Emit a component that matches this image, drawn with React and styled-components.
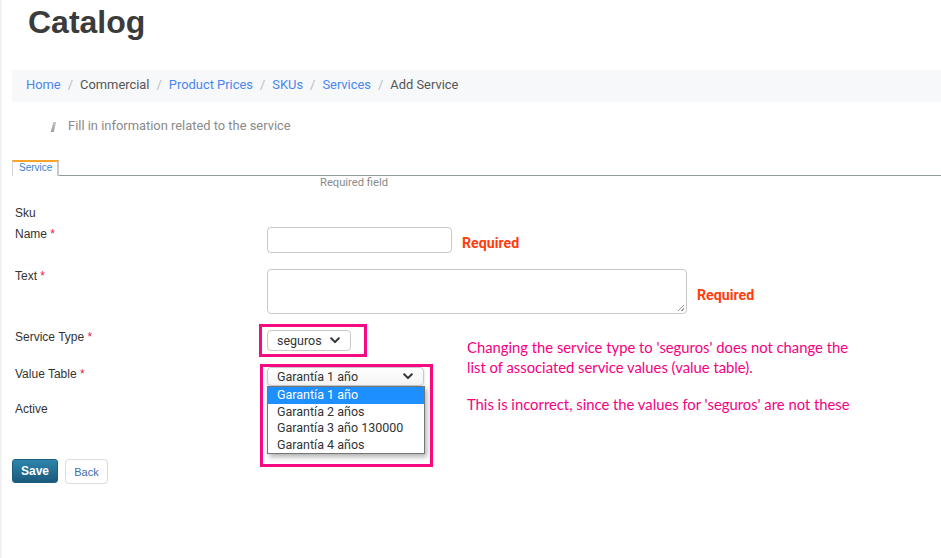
import React from 'react'
import styled, {createGlobalStyle} from "styled-components";

const GlobalStyle = createGlobalStyle`
  html, body {
    margin: 0;
    padding: 0;
    background: #fff;
  }
`;

const crumbs = [
  {label: "Home", link: true},
  {label: "Commercial"},
  {label: "Product Prices", link: true},
  {label: "SKUs", link: true},
  {label: "Services", link: true},
  {label: "Add Service"},
];

const options = ["Garantía 1 año", "Garantía 2 años", "Garantía 3 año 130000", "Garantía 4 años"];

const Chevron = () => (
  <svg width="10" height="7" viewBox="0 0 10 7">
    <path d="M1.2 1.3 L5 5.1 L8.8 1.3" fill="none" stroke="#333" strokeWidth="2" strokeLinecap="round" strokeLinejoin="round"/>
  </svg>
);

const App = () => {
  return (
    <Wrapper>
      <GlobalStyle/>
      <Title>Catalog</Title>

      <Breadcrumb>
        {crumbs.map((c, i) => (
          <React.Fragment key={c.label}>
            {i > 0 && <Sep>/</Sep>}
            <Crumb $link={c.link}>{c.label}</Crumb>
          </React.Fragment>
        ))}
      </Breadcrumb>

      <Intro>
        <Mark/>
        <span>Fill in information related to the service</span>
      </Intro>

      <Tabs>
        <Tab>Service</Tab>
      </Tabs>
      <RequiredNote>Required field</RequiredNote>

      <Form>
        <Row $gap={6}>
          <Label>Sku</Label>
        </Row>
        <Row>
          <Label $shift={1}>Name <Star>*</Star></Label>
          <Field>
            <Input/>
            <Error $top={9}>Required</Error>
          </Field>
        </Row>
        <Row>
          <Label>Text <Star>*</Star></Label>
          <Field>
            <TextArea/>
            <Error $top={18}>Required</Error>
          </Field>
        </Row>
        <Row>
          <Label>Service Type <Star>*</Star></Label>
          <Field>
            <Anchor>
              <SelectBox $width={84} $height={21}>
                <span>seguros</span>
                <Chevron/>
              </SelectBox>
              <Frame style={{left: -8, top: -6, width: 108, height: 33}}/>
              <Note>
                <p>Changing the service type to 'seguros' does not change the<br/>list of associated service values (value table).</p>
                <p>This is incorrect, since the values for 'seguros' are not these</p>
              </Note>
            </Anchor>
          </Field>
        </Row>
        <Row>
          <Label>Value Table <Star>*</Star></Label>
          <Field>
            <Anchor>
              <SelectBox $width={157} $height={19} $raised>
                <span>Garantía 1 año</span>
                <Chevron/>
              </SelectBox>
              <OptionList>
                {options.map((o, i) => (
                  <Option key={o} $active={i === 0}>{o}</Option>
                ))}
              </OptionList>
              <Frame style={{left: -7, top: -3, width: 173, height: 103}}/>
            </Anchor>
          </Field>
        </Row>
        <Row $gap={43}>
          <Label>Active</Label>
        </Row>
      </Form>

      <Actions>
        <SaveButton>Save</SaveButton>
        <BackButton>Back</BackButton>
      </Actions>
    </Wrapper>
  )
}

const Wrapper = styled.div`
    min-height: 558px;
    box-sizing: border-box;
    border-left: 2px solid #f1f1f1;
    padding: 4px 0 40px 10px;
    font-family: "Liberation Sans", Arial, sans-serif;
`;

const Title = styled.h1`
    margin: 0;
    padding-left: 16px;
    font-size: 32px;
    line-height: 36px;
    font-weight: 700;
    color: #3b3b3b;
`;

const Breadcrumb = styled.nav`
    margin-top: 30px;
    height: 32px;
    display: flex;
    align-items: center;
    padding: 0 0 3px 14px;
    box-sizing: border-box;
    background: #f7f8fa;
    font-family: Roboto, sans-serif;
    font-size: 12.9px;
`;

const Crumb = styled.span`
    color: ${({$link}) => $link ? "#4a86f0" : "#555"};
`;

const Sep = styled.span`
    color: #bbb;
    padding: 0 7px;
`;

const Intro = styled.div`
    margin-top: 15px;
    height: 16px;
    display: flex;
    align-items: center;
    gap: 13px;
    padding-left: 40px;
    font-family: Roboto, sans-serif;
    font-size: 12.9px;
    color: #8a8a8a;
`;

const Mark = styled.span`
    display: block;
    width: 3px;
    height: 10px;
    margin-top: 4px;
    background: linear-gradient(#c8c8c8, #9a9a9a);
    transform: skewX(-14deg);
`;

const Tabs = styled.div`
    margin-top: 27px;
    display: flex;
    border-bottom: 1px solid #8e9c9c;
`;

const Tab = styled.div`
    height: 13px;
    padding: 0 6px 1px 6px;
    border-top: 2px solid #f5a52a;
    border-left: 1px solid #d4d4d4;
    border-right: 2px solid #c9c9c9;
    font-size: 10px;
    line-height: 12px;
    color: #3a7fd0;
    margin-bottom: -1px;
    background: #fff;
    width: 32px;
`;

const RequiredNote = styled.div`
    padding: 1px 0 0 308px;
    font-family: Roboto, sans-serif;
    font-size: 11.2px;
    line-height: 12px;
    color: #8a8a8a;
`;

const Form = styled.div`
    margin-top: 17px;
    padding-left: 3px;
`;

const Row = styled.div`
    display: grid;
    grid-template-columns: 252px 1fr;
    align-items: start;
    margin-bottom: ${({$gap}) => $gap ?? 16}px;
`;

const Label = styled.div`
    padding-top: ${({$shift}) => $shift ?? 0}px;
    font-size: 12px;
    line-height: 14px;
    color: #333;
`;

const Star = styled.span`
    color: #e8193c;
`;

const Field = styled.div`
    display: flex;
    align-items: flex-start;
`;

const Input = styled.div`
    width: 183px;
    height: 24px;
    margin-top: 1px;
    border: 1px solid #c9c9c9;
    border-radius: 4px;
    background: #fff;
`;

const TextArea = styled.div`
    width: 418px;
    height: 43px;
    border: 1px solid #c9c9c9;
    border-radius: 4px;
    background: #fff;
    position: relative;

    &::after {
        content: "";
        position: absolute;
        right: 2px;
        bottom: 2px;
        width: 6px;
        height: 6px;
        background: linear-gradient(135deg, transparent 45%, #999 45%, #999 55%, transparent 55%, transparent 75%, #999 75%, #999 85%, transparent 85%);
    }
`;

const Error = styled.span`
    margin: ${({$top}) => $top}px 0 0 10px;
    font-family: Roboto, sans-serif;
    font-size: 14.2px;
    line-height: 16px;
    font-weight: 700;
    color: #ff3d0d;
`;

const Anchor = styled.div`
    position: relative;
`;

const SelectBox = styled.div`
    box-sizing: border-box;
    width: ${({$width}) => $width}px;
    height: ${({$height}) => $height}px;
    display: flex;
    align-items: center;
    justify-content: space-between;
    padding: 0 10px 0 9px;
    border: 1px solid #c9c9c9;
    border-radius: 4px;
    background: ${({$raised}) => $raised ? "linear-gradient(#fff, #f4f4f4)" : "#fff"};
    box-shadow: ${({$raised}) => $raised ? "0 1px 3px rgba(0,0,0,0.18)" : "none"};
    font-family: Roboto, sans-serif;
    font-size: 12.5px;
    color: #333;
`;

const OptionList = styled.ul`
    position: absolute;
    left: 0;
    top: 19px;
    width: 158px;
    margin: 0;
    padding: 0;
    list-style: none;
    box-sizing: border-box;
    border: 1px solid #767676;
    background: #fff;
    box-shadow: 2px 3px 5px rgba(0,0,0,0.3);
    z-index: 2;
`;

const Option = styled.li`
    height: 16.5px;
    line-height: 16.5px;
    padding-left: 9px;
    font-family: Roboto, sans-serif;
    font-size: 12.5px;
    color: ${({$active}) => $active ? "#fff" : "#333"};
    background: ${({$active}) => $active ? "#1e8fff" : "transparent"};
`;

const Frame = styled.span`
    position: absolute;
    box-sizing: border-box;
    border: 3px solid #f50a84;
    pointer-events: none;
    z-index: 3;
`;

const Note = styled.div`
    position: absolute;
    left: 200px;
    top: 7px;
    white-space: nowrap;
    font-family: Lato, sans-serif;
    font-size: 14.8px;
    line-height: 20px;
    color: #f5007f;

    p {
        margin: 0;
    }

    p + p {
        margin-top: 17px;
    }
`;

const Actions = styled.div`
    display: flex;
    gap: 7px;
`;

const SaveButton = styled.button`
    width: 46px;
    height: 24px;
    padding: 0;
    border: 1px solid #1d5f80;
    border-radius: 3px;
    background: linear-gradient(#2e84ad, #1b5a7c);
    color: #fff;
    font-family: "Liberation Sans", Arial, sans-serif;
    font-size: 12px;
    font-weight: 700;
`;

const BackButton = styled.button`
    width: 43px;
    height: 25px;
    padding: 0;
    border: 1px solid #dcdcdc;
    border-radius: 4px;
    background: #fff;
    color: #3b6ea8;
    font-family: "Liberation Sans", Arial, sans-serif;
    font-size: 11px;
`;

export default App
